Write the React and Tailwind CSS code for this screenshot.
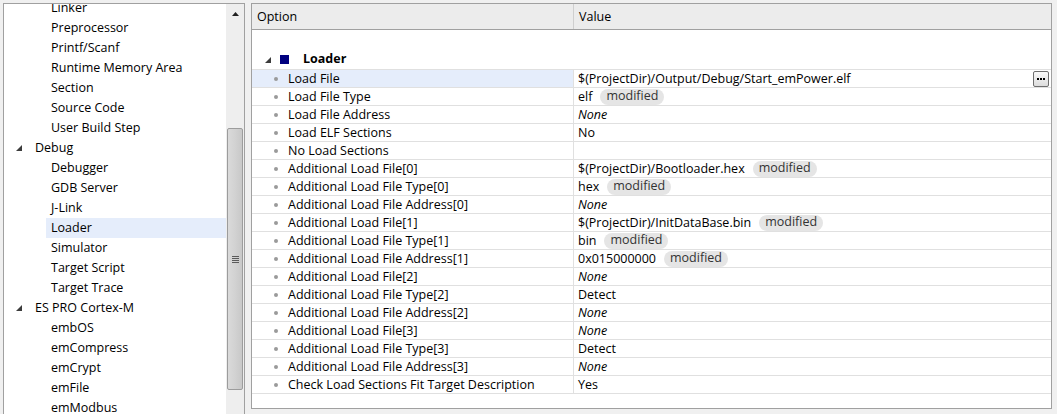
import React from "react";

const font = { fontFamily: '"Segoe UI", "Open Sans", "Noto Sans", sans-serif' };

const treeItems = [
  { t: "Linker", l: 1 },
  { t: "Preprocessor", l: 1 },
  { t: "Printf/Scanf", l: 1 },
  { t: "Runtime Memory Area", l: 1 },
  { t: "Section", l: 1 },
  { t: "Source Code", l: 1 },
  { t: "User Build Step", l: 1 },
  { t: "Debug", l: 0 },
  { t: "Debugger", l: 1 },
  { t: "GDB Server", l: 1 },
  { t: "J-Link", l: 1 },
  { t: "Loader", l: 1, sel: true },
  { t: "Simulator", l: 1 },
  { t: "Target Script", l: 1 },
  { t: "Target Trace", l: 1 },
  { t: "ES PRO Cortex-M", l: 0 },
  { t: "embOS", l: 1 },
  { t: "emCompress", l: 1 },
  { t: "emCrypt", l: 1 },
  { t: "emFile", l: 1 },
  { t: "emModbus", l: 1 },
];

const rows = [
  { o: "Load File", v: "$(ProjectDir)/Output/Debug/Start_emPower.elf", sel: true, btn: true },
  { o: "Load File Type", v: "elf", mod: true },
  { o: "Load File Address", v: "None", it: true },
  { o: "Load ELF Sections", v: "No" },
  { o: "No Load Sections", v: "" },
  { o: "Additional Load File[0]", v: "$(ProjectDir)/Bootloader.hex", mod: true },
  { o: "Additional Load File Type[0]", v: "hex", mod: true },
  { o: "Additional Load File Address[0]", v: "None", it: true },
  { o: "Additional Load File[1]", v: "$(ProjectDir)/InitDataBase.bin", mod: true },
  { o: "Additional Load File Type[1]", v: "bin", mod: true },
  { o: "Additional Load File Address[1]", v: "0x015000000", mod: true },
  { o: "Additional Load File[2]", v: "None", it: true },
  { o: "Additional Load File Type[2]", v: "Detect" },
  { o: "Additional Load File Address[2]", v: "None", it: true },
  { o: "Additional Load File[3]", v: "None", it: true },
  { o: "Additional Load File Type[3]", v: "Detect" },
  { o: "Additional Load File Address[3]", v: "None", it: true },
  { o: "Check Load Sections Fit Target Description", v: "Yes" },
];

function Expander() {
  return (
    <svg width="6" height="6" viewBox="0 0 6 6" className="shrink-0">
      <polygon points="6,0 6,6 0,6" fill="#3c3c3c" />
    </svg>
  );
}

function Tree() {
  return (
    <div className="flex h-[420px] w-[242px] border border-[#a0a0a0] bg-white">
      <div className="w-[222px] overflow-hidden">
        <div className="-mt-[6px] flex flex-col">
          {treeItems.map((it, i) => (
            <div key={i} className="flex h-[20px] items-center">
              {it.l === 0 ? (
                <div className="flex items-center pl-[12px]">
                  <Expander />
                  <span className="pl-[13px] text-[12.5px] leading-none text-black">{it.t}</span>
                </div>
              ) : (
                <div
                  className={
                    "ml-[42px] flex h-[20px] flex-1 items-center pl-[5px] " +
                    (it.sel ? "bg-[#e5edfb]" : "")
                  }
                >
                  <span className="text-[12.5px] leading-none text-black">{it.t}</span>
                </div>
              )}
            </div>
          ))}
        </div>
      </div>
      <div className="flex w-[18px] flex-col items-center bg-[#eeeeee]">
        <div className="flex h-[20px] w-full items-center justify-center">
          <svg width="7" height="4" viewBox="0 0 7 4">
            <polygon points="3.5,0 7,4 0,4" fill="#202020" />
          </svg>
        </div>
        <div className="mt-[104px] flex h-[262px] w-[16px] flex-col items-center justify-center rounded-[2px] border border-[#9c9c9c] bg-gradient-to-r from-[#dadada] via-[#d2d2d2] to-[#c8c8c8]">
          <div className="flex flex-col gap-[1px]">
            <div className="h-[1px] w-[7px] bg-[#5a5a5a]" />
            <div className="h-[1px] w-[7px] bg-[#5a5a5a]" />
            <div className="h-[1px] w-[7px] bg-[#5a5a5a]" />
            <div className="h-[1px] w-[7px] bg-[#5a5a5a]" />
          </div>
        </div>
      </div>
    </div>
  );
}

function Badge() {
  return (
    <span className="ml-[8px] flex h-[16px] items-center rounded-full bg-[#e5e5e5] px-[6px] text-[12.5px] leading-none text-[#333]">
      modified
    </span>
  );
}

function Table() {
  return (
    <div className="ml-[6px] flex h-[406px] w-[801px] flex-col border border-[#a0a0a0] bg-white">
      <div className="flex h-[26px] shrink-0 border-b border-[#a0a0a0] bg-[#ececec]">
        <div className="flex w-[322px] items-center border-r border-[#cfcfcf] pl-[5px] pt-[2px] text-[12.5px] text-black">
          Option
        </div>
        <div className="flex flex-1 items-center pl-[5px] pt-[2px] text-[12.5px] text-black">Value</div>
      </div>
      <div className="flex h-[40px] shrink-0 items-end border-b border-[#e0e0e0]">
        <div className="flex h-[19px] items-center pl-[13px]">
          <Expander />
          <div className="ml-[9px] h-[9px] w-[9px] bg-[#00007f]" />
          <span className="ml-[14px] text-[12.5px] font-bold text-black">Loader</span>
        </div>
      </div>
      {rows.map((r, i) => (
        <div key={i} className="flex h-[18px] shrink-0 border-b border-[#e0e0e0]">
          <div
            className={
              "flex w-[322px] items-center border-r border-[#e0e0e0] pl-[22px] " +
              (r.sel ? "bg-[#e5edfb]" : "")
            }
          >
            <div className="h-[4px] w-[4px] rounded-full bg-[#9a9a9a]" />
            <span className="ml-[10px] pt-[1px] text-[12.5px] leading-none text-black">{r.o}</span>
          </div>
          <div className="flex flex-1 items-center pl-[4px] pr-[2px]">
            <span className={"pt-[1px] text-[12.5px] leading-none text-black " + (r.it ? "italic" : "")}>{r.v}</span>
            {r.mod && <Badge />}
            {r.btn && (
              <div className="ml-auto flex h-[16px] w-[16px] items-center justify-center gap-[1px] rounded-[2px] border border-[#6e6e6e] bg-gradient-to-b from-[#fafafa] to-[#dcdcdc]">
                <div className="h-[2px] w-[2px] bg-black" />
                <div className="h-[2px] w-[2px] bg-black" />
                <div className="h-[2px] w-[2px] bg-black" />
              </div>
            )}
          </div>
        </div>
      ))}
    </div>
  );
}

export default function App() {
  return (
    <div className="flex h-[414px] w-[1057px] overflow-hidden bg-[#f0f0f0] pl-[3px] pt-[3px]" style={font}>
      <Tree />
      <Table />
    </div>
  );
}
